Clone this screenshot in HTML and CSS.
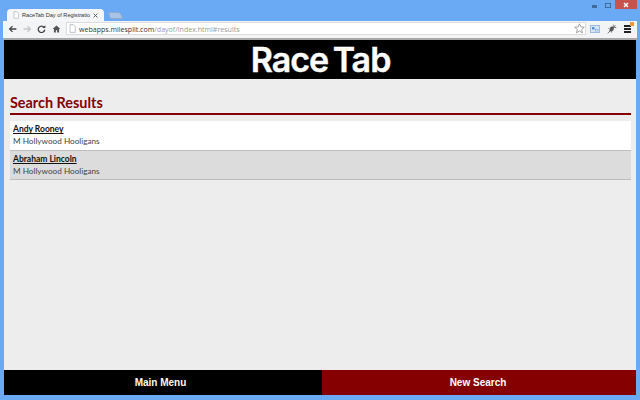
FILE: index.html
```html
<!DOCTYPE html>
<html lang="en">
<head>
<meta charset="utf-8">
<title>RaceTab Day of Registration</title>
<link rel="stylesheet" href="styles.css">
</head>
<body>
<div class="window">
  <div class="tabstrip">
    <div class="tab">
      <svg class="page-icon" viewBox="0 0 10 12"><path d="M1.500.5h4.500l3 3v8h-7.500z" fill="#fff" stroke="#a4a8ad"/></svg>
      <span class="tab-title">RaceTab Day of Registratio</span>
      <svg class="tab-close" viewBox="0 0 8 8"><path d="M1 1l6 6M7 1l-6 6" stroke="#555" stroke-width="1.500"/></svg>
    </div>
    <div class="new-tab"></div>
    <div class="win-controls">
      <svg class="win-min" viewBox="0 0 5 3"><rect width="5" height="3" fill="#3f6a9c"/></svg>
      <svg class="win-max" viewBox="0 0 6 5"><rect x=".5" y=".5" width="5" height="4" fill="none" stroke="#3f6a9c"/></svg>
      <div class="win-close"><svg viewBox="0 0 9 8"><path d="M1.500 1l6 6M7.500 1l-6 6" stroke="#fff" stroke-width="2"/></svg></div>
    </div>
  </div>
  <div class="toolbar">
    <svg class="tb-icon" viewBox="0 0 14 12"><path d="M13 6H3M7 1.500L2.500 6 7 10.500" fill="none" stroke="#444" stroke-width="2"/></svg>
    <svg class="tb-icon" viewBox="0 0 14 12"><path d="M1 6h10M7 1.500L11.500 6 7 10.500" fill="none" stroke="#c4c6c9" stroke-width="2"/></svg>
    <svg class="tb-icon" viewBox="0 0 14 12"><path d="M11 3.500A5 5 0 1 0 12 7" fill="none" stroke="#444" stroke-width="2"/><path d="M8 4.500h5v-4.500z" fill="#444"/></svg>
    <svg class="tb-icon" viewBox="0 0 14 12"><path d="M7 .5L1 6h2v5.500h3V8h2v3.500h3V6h2z" fill="#555"/></svg>
    <div class="omnibox">
      <svg class="omni-page" viewBox="0 0 10 12"><path d="M1.500.5h4.500l3 3v8h-7.500z" fill="#fff" stroke="#a4a8ad"/></svg>
      <span class="url"><span class="host">webapps.milesplit.com</span>/dayof/index.html#results</span>
      <svg class="star" viewBox="0 0 14 14"><path d="M7 1l1.800 4 4.200.4-3.200 2.800 1 4.300L7 10.200 3.200 12.500l1-4.300L1 5.400 5.200 5z" fill="#fff" stroke="#8a8a8a"/></svg>
    </div>
    <svg class="ext ext-cast" viewBox="0 0 10 8"><rect x=".5" y=".5" width="9" height="7" fill="#d6e6f7" stroke="#9dbde0"/><rect x="2" y="2" width="2.500" height="2.500" fill="#5a94d0"/><rect x="5.500" y="4.500" width="2.500" height="1.500" fill="#fff" stroke="#5a94d0" stroke-width=".5"/></svg>
    <svg class="ext ext-bug" viewBox="0 0 14 14"><path d="M3 11l2-7 5-1-1 6z" fill="#555"/><path d="M9 1l1 2M12 2l-2 2M13 5l-3 0M1 13l3-3M2 6l2 1M6 12l1-3" stroke="#444"/></svg>
    <div class="menu-btn">
      <span class="menu-line"></span><span class="menu-line"></span><span class="menu-line"></span>
      <span class="menu-badge"></span>
    </div>
  </div>
  <main class="page">
    <header class="brand"><span class="brand-name">Race Tab</span></header>
    <section class="results">
      <h1 class="results-title">Search Results</h1>
      <ul class="result-list">
        <li class="result">
          <a class="result-name">Andy Rooney</a>
          <span class="result-team">M Hollywood Hooligans</span>
        </li>
        <li class="result result-alt">
          <a class="result-name">Abraham Lincoln</a>
          <span class="result-team">M Hollywood Hooligans</span>
        </li>
      </ul>
    </section>
    <footer class="actions">
      <a class="action action-menu">Main Menu</a>
      <a class="action action-search">New Search</a>
    </footer>
  </main>
</div>
</body>
</html>
```
FILE: styles.css
```css
* { box-sizing: border-box; }
html, body { margin: 0; height: 100%; }
body { background: #6aa9f4; overflow: hidden; font-family: "Lato", sans-serif; }
.window { height: 400px; display: flex; flex-direction: column; padding: 0 4px 5px; }

.tabstrip { height: 21px; flex: none; display: flex; align-items: flex-end; margin: 0 -1px; position: relative; }
.tab { width: 97px; height: 12px; margin-left: 4px; background: #f5f6f7; border-radius: 4px 4px 0 0; display: flex; align-items: center; padding: 0 0 0 6px; }
.page-icon { width: 6px; height: 8px; flex: none; margin-right: 3px; }
.tab-title { font: 5.600px "Liberation Sans", sans-serif; color: #333; white-space: nowrap; width: 71px; flex: none; }
.tab-close { width: 5px; height: 5px; flex: none; }
.new-tab { width: 13px; height: 7px; margin: 0 0 2px 5px; background: #a9c4e6; border: 1px solid #8daacd; border-radius: 2px 3px 0 0; transform: skewX(20deg); }
.win-controls { position: absolute; right: 0; top: 0; display: flex; align-items: flex-start; }
.win-min { width: 5px; height: 3px; margin: 5px 8px 0 0; }
.win-max { width: 6px; height: 5px; margin: 3px 4px 0 0; }
.win-close { width: 22px; height: 9px; background: #c9524c; display: flex; align-items: center; justify-content: center; }
.win-close svg { width: 6px; height: 6px; }

.toolbar { height: 19px; flex: none; margin: 0 -1px; background: #f3f4f5; display: flex; align-items: center; padding: 0 6px 2px 5px; gap: 4px; border-bottom: 2px solid #a8a8a8; }
.tb-icon { width: 9px; height: 8px; flex: none; margin-right: 1.500px; }
.omnibox { flex: 1; height: 13px; background: #fff; border: 1px solid #dcdcdc; display: flex; align-items: center; padding: 0 0 0 2px; gap: 3px; }
.omni-page { flex: none; width: 7px; height: 9px; }
.star { flex: none; width: 11px; height: 11px; }
.url { flex: 1; font: 7.050px "Open Sans", sans-serif; color: #9a9a9a; white-space: nowrap; }
.host { color: #333; }
.ext { flex: none; margin-right: 3px; }
.ext-cast { width: 10px; height: 8px; }
.ext-bug { width: 10px; height: 10px; }
.menu-btn { width: 7px; height: 8px; position: relative; display: flex; flex-direction: column; justify-content: space-between; }
.menu-line { display: block; height: 2px; background: #222; }
.menu-badge { position: absolute; top: -3px; right: -3px; width: 4px; height: 4px; background: #f29a2e; }

.page { flex: 1; min-height: 0; background: #ededed; display: flex; flex-direction: column; }
.brand { height: 39px; flex: none; background: #000; display: flex; align-items: center; justify-content: center; padding-left: 1px; }
.brand-name { font: 600 34px/39px "Inter", sans-serif; color: #fff; letter-spacing: -1px; word-spacing: -3px; -webkit-text-stroke: .4px #fff; }

.results { flex: 1; padding: 14px 5px 0 6px; }
.results-title { margin: 0; height: 22px; font: 700 14.400px/20px "Lato", sans-serif; color: #850000; border-bottom: 2px solid #850000; }
.result-list { list-style: none; margin: 6px 0 0; padding: 0; }
.result { height: 30px; padding: 2px 3px 0; background: #fff; border-bottom: 1px solid #bdbdbd; display: flex; flex-direction: column; }
.result-alt { height: 29px; background: #dcdcdc; }
.result-name { font: 700 8.500px/12px "Lato", sans-serif; color: #111; text-decoration: underline; }
.result-team { font: 8.200px/12px "Lato", sans-serif; color: #444; }

.actions { height: 25px; flex: none; display: flex; }
.action { display: flex; align-items: center; justify-content: center; font: 700 10px "Liberation Sans", sans-serif; color: #fff; }
.action-menu { width: 318px; padding-right: 5px; background: #000; color: #fffbe8; }
.action-search { flex: 1; padding-right: 2px; background: #850000; }
```
